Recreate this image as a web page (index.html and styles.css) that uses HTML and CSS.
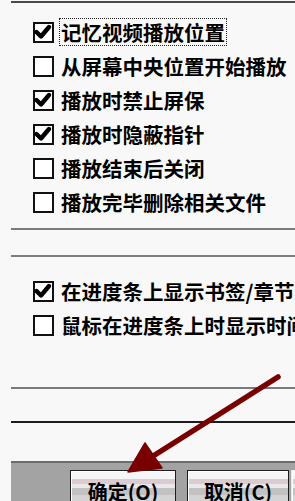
FILE: index.html
```html
<!DOCTYPE html>
<html lang="zh-CN">
<head>
<meta charset="utf-8">
<link rel="stylesheet" href="styles.css">
</head>
<body>
<div class="page">
  <div class="rule rule-top"></div>
  <ul class="group group-a">
    <li class="opt"><span class="box on"><svg viewBox="0 0 21 21"><path d="M3.5 10 L8 14.5 L16 5"/></svg></span><span class="label focus">记忆视频播放位置</span></li>
    <li class="opt"><span class="box"></span><span class="label">从屏幕中央位置开始播放</span></li>
    <li class="opt"><span class="box on"><svg viewBox="0 0 21 21"><path d="M3.5 10 L8 14.5 L16 5"/></svg></span><span class="label">播放时禁止屏保</span></li>
    <li class="opt"><span class="box on"><svg viewBox="0 0 21 21"><path d="M3.5 10 L8 14.5 L16 5"/></svg></span><span class="label">播放时隐蔽指针</span></li>
    <li class="opt"><span class="box"></span><span class="label">播放结束后关闭</span></li>
    <li class="opt"><span class="box"></span><span class="label">播放完毕删除相关文件</span></li>
  </ul>
  <div class="rule rule-b"></div>
  <div class="rule rule-c"></div>
  <ul class="group group-b">
    <li class="opt"><span class="box on"><svg viewBox="0 0 21 21"><path d="M3.5 10 L8 14.5 L16 5"/></svg></span><span class="label">在进度条上显示书签/章节</span></li>
    <li class="opt"><span class="box"></span><span class="label">鼠标在进度条上时显示时间</span></li>
  </ul>
  <div class="rule rule-d"></div>
  <div class="rule rule-e"></div>
  <div class="footer">
    <button class="btn btn-ok">确定(<u>O</u>)</button>
    <button class="btn btn-cancel">取消(<u>C</u>)</button>
    <button class="btn btn-more"></button>
  </div>
  <svg class="arrow" viewBox="0 0 295 501" width="295" height="501">
    <line x1="278" y1="377" x2="150" y2="458"/>
    <polygon points="128,472 145,443 162,468"/>
  </svg>
</div>
</body>
</html>
```
FILE: styles.css
```css
html, body {
  margin: 0;
  padding: 0;
  background: #f8f8f8;
  overflow: hidden;
}
.page {
  position: relative;
  width: 295px;
  height: 501px;
  overflow: hidden;
  padding-left: 11px;
  box-sizing: border-box;
  font-family: "Noto Sans CJK SC", "Microsoft YaHei", sans-serif;
  color: #000;
}
.rule {
  height: 2px;
  background: #777;
}
.rule-top { margin-top: 1px; background: #4a4a4a; }
.rule-b { margin-top: 9px; background: #7a7a7a; }
.rule-c { margin-top: 25px; background: #7d7d7d; }
.rule-d { margin-top: 45px; background: #7a7a7a; }
.rule-e { margin-top: 32px; background: #1c1c1c; }
.group {
  list-style: none;
  margin: 0;
  padding: 0 0 0 22px;
}
.group-a { margin-top: 12px; }
.group-b { margin-top: 17px; }
.opt {
  height: 34px;
  display: flex;
  align-items: center;
  white-space: nowrap;
}
.box {
  flex: none;
  width: 21px;
  height: 21px;
  box-sizing: border-box;
  border: 2px solid #111;
  background: #fff;
  display: flex;
  align-items: center;
  justify-content: center;
}
.box svg {
  width: 21px;
  height: 21px;
  flex: none;
}
.box svg path {
  fill: none;
  stroke: #000;
  stroke-width: 4.4;
  stroke-linecap: round;
  stroke-linejoin: round;
}
.label {
  margin-left: 5px;
  font-size: 20.5px;
  font-weight: 700;
  line-height: 26px;
  padding: 0 1px;
  border: 1px solid transparent;
}
.label.focus {
  border: 1px dotted #222;
}
.footer {
  margin-top: 38px;
  height: 60px;
  border-top: 2px solid #6c6c6c;
  background: #a3a3a3;
  display: flex;
  gap: 11px;
  padding: 7px 0 0 59px;
  box-sizing: border-box;
}
.btn {
  flex: none;
  height: 40px;
  margin: 0;
  padding: 3px 0 0 0;
  border: 1px solid #1e1e1e;
  box-shadow: inset 1px 1px 0 #fff;
  background: linear-gradient(to bottom, #f6f6f6 0, #f6f6f6 8px, #dccbcf 8px, #dccbcf 13px, #ebe8e9 13px, #ebe8e9 17px, #c2c2c2 17px, #c2c2c2 24px, #d4d4d4 24px);
  font-family: "Noto Sans CJK SC", "Microsoft YaHei", sans-serif;
  font-size: 20px;
  font-weight: 700;
  line-height: 26px;
  color: #000;
  text-align: center;
  vertical-align: top;
}
.btn u { text-decoration: none; }
.btn-ok { width: 106px; }
.btn-cancel { width: 102px; }
.btn-more { width: 20px; margin-left: -9px; border-color: #e8e8e8; }
.arrow {
  position: absolute;
  left: 0;
  top: 0;
  pointer-events: none;
}
.arrow line {
  stroke: #780000;
  stroke-width: 5.5;
  stroke-linecap: round;
}
.arrow polygon {
  fill: #780000;
  stroke: #780000;
  stroke-width: 1.5;
  stroke-linejoin: round;
}
```
